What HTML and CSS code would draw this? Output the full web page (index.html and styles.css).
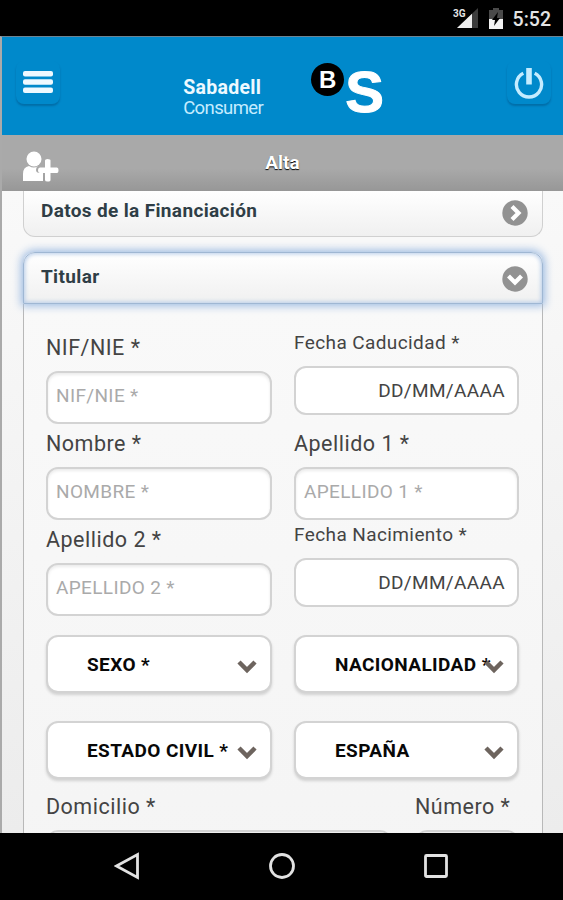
FILE: index.html
```html
<!DOCTYPE html>
<html lang="es">
<head>
  <meta charset="UTF-8" />
  <meta name="viewport" content="width=device-width,initial-scale=1.0">
  <title>Sabadell Consumer - Alta</title>
  <link rel="stylesheet" href="styles.css">
</head>
<body>
  <div class="statusbar">
    <span class="network">3G</span>
    <svg class="signal" width="21" height="20" viewBox="0 0 21 20">
      <path d="M0 20L21 0V20Z" fill="#3c3c3c"/>
      <path d="M0 20L15 5.7V20Z" fill="#eee"/>
    </svg>
    <svg class="battery" width="14" height="21" viewBox="0 0 14 21">
      <path d="M0 2H4V0H10V2H14V21H0Z" fill="#4a4a4a"/>
      <path d="M0 11H14V21H0Z" fill="#f2f2f2"/>
      <path d="M9 4L3 12H6L5 18L11 10H8Z" fill="#000"/>
    </svg>
    <span class="clock">5:52</span>
  </div>

  <div class="app">
    <header class="header">
      <button class="header-btn" title="Menú">
        <svg width="30" height="23" viewBox="0 0 30 23" fill="#eef9ff">
          <rect width="30" height="5.500" rx="2"/>
          <rect y="8.200" width="30" height="5.500" rx="2"/>
          <rect y="16.400" width="30" height="5.500" rx="2"/>
        </svg>
      </button>
      <div class="brand">
        <div class="brand-name"><b>Sabadell</b><span>Consumer</span></div>
        <div class="brand-b">B</div>
        <div class="brand-s">S</div>
      </div>
      <button class="header-btn" title="Salir">
        <svg width="30" height="32" viewBox="0 0 30 32" fill="none" stroke="#c5ecff">
          <path d="M9.3 6.2A12.6 12.6 0 1 0 20.7 6.2" stroke-width="3.4"/>
          <path d="M15 1V17.5" stroke-width="5.6"/>
        </svg>
      </button>
    </header>

    <div class="titlebar">
      <svg class="add-user" width="36" height="31" viewBox="0 0 36 31" fill="#fff">
        <circle cx="11" cy="8" r="7.5"/>
        <path d="M0 30V23Q0 16 6 15Q11 18 15 15Q13 16 13 19Q13 22 17 22H20V30Z"/>
        <path d="M22 9.5Q22 8 24.5 8Q27.500 8 27.500 9.500V16.500H34Q35.500 16.500 35.500 19Q35.500 22 34 22H27.500V29Q27.500 30.500 24.500 30.500Q22 30.500 22 29V22H17Q15 22 15 19Q15 16.500 17 16.500H22Z"/>
      </svg>
      <h1>Alta</h1>
    </div>

    <main class="content">
      <div class="section-head">
        <span>Datos de la Financiación</span>
        <svg class="bullet" width="26" height="26" viewBox="0 0 26 26">
          <circle cx="13" cy="13" r="12.700" fill="#929292"/>
          <path d="M10 6.500L16.500 13L10 19.500" fill="none" stroke="#fff" stroke-width="4.200"/>
        </svg>
      </div>

      <div class="section-head open">
        <span>Titular</span>
        <svg class="bullet" width="26" height="26" viewBox="0 0 26 26">
          <circle cx="13" cy="13" r="12.700" fill="#929292"/>
          <path d="M6.500 10L13 16.500L19.500 10" fill="none" stroke="#fff" stroke-width="4.200"/>
        </svg>
      </div>

      <form class="panel">
        <div class="field">
          <label>NIF/NIE *</label>
          <div class="input">NIF/NIE *</div>
        </div>
        <div class="field date">
          <label>Fecha Caducidad *</label>
          <div class="input">DD/MM/AAAA</div>
        </div>
        <div class="field">
          <label>Nombre *</label>
          <div class="input">NOMBRE *</div>
        </div>
        <div class="field">
          <label>Apellido 1 *</label>
          <div class="input">APELLIDO 1 *</div>
        </div>
        <div class="field">
          <label>Apellido 2 *</label>
          <div class="input">APELLIDO 2 *</div>
        </div>
        <div class="field date">
          <label>Fecha Nacimiento *</label>
          <div class="input">DD/MM/AAAA</div>
        </div>

        <div class="select">
          <span>SEXO *</span>
          <svg width="20" height="14" viewBox="0 0 20 14"><path d="M2 2L10 10L18 2" fill="none" stroke="#6d645e" stroke-width="4.500"/></svg>
        </div>
        <div class="select">
          <span>NACIONALIDAD *</span>
          <svg width="20" height="14" viewBox="0 0 20 14"><path d="M2 2L10 10L18 2" fill="none" stroke="#6d645e" stroke-width="4.500"/></svg>
        </div>
        <div class="select">
          <span>ESTADO CIVIL *</span>
          <svg width="20" height="14" viewBox="0 0 20 14"><path d="M2 2L10 10L18 2" fill="none" stroke="#6d645e" stroke-width="4.500"/></svg>
        </div>
        <div class="select">
          <span>ESPAÑA</span>
          <svg width="20" height="14" viewBox="0 0 20 14"><path d="M2 2L10 10L18 2" fill="none" stroke="#6d645e" stroke-width="4.500"/></svg>
        </div>

        <div class="address">
          <div class="field street">
            <label>Domicilio *</label>
            <div class="input"></div>
          </div>
          <div class="field number">
            <label>Número *</label>
            <div class="input"></div>
          </div>
        </div>
      </form>
    </main>
  </div>

  <nav class="navbar">
    <svg width="26" height="28" viewBox="0 0 26 28"><path d="M2.500 14L23.500 2.500V25.500Z"/></svg>
    <svg width="28" height="28" viewBox="0 0 28 28"><circle cx="14" cy="14" r="11.500"/></svg>
    <svg width="26" height="28" viewBox="0 0 26 28"><rect x="2.500" y="3.500" width="21" height="21" rx="1"/></svg>
  </nav>
</body>
</html>
```
FILE: styles.css
```css
* {
  box-sizing: border-box;
}

body {
  margin: 0;
  height: 900px;
  display: flex;
  flex-direction: column;
  overflow: hidden;
  background: #000;
  font-family: Roboto, "Liberation Sans", sans-serif;
}

svg {
  display: block;
  flex: none;
}

/* Android status bar */
.statusbar {
  height: 36px;
  flex: none;
  display: flex;
  align-items: flex-start;
  justify-content: flex-end;
  padding: 8px 12px 0 0;
  color: #e4e4e4;
}

.network {
  font-size: 10px;
  font-weight: bold;
  line-height: 12px;
  margin-right: -9px;
}

.battery {
  margin: 0 10px 0 11px;
}

.clock {
  font-size: 19.5px;
  font-weight: 500;
  line-height: 23px;
}

.app {
  flex: 1;
  min-height: 0;
  display: flex;
  flex-direction: column;
  border-top: 1px solid #6d8594;
  border-left: 2px solid #aaa;
}

.header {
  height: 98px;
  flex: none;
  display: flex;
  justify-content: space-between;
  align-items: flex-start;
  padding: 24px 12px 0 14px;
  background: #0089cb;
}

.header-btn {
  width: 44px;
  height: 43px;
  padding: 0;
  border: 0;
  border-radius: 8px;
  display: flex;
  justify-content: center;
  align-items: center;
  background: transparent;
  box-shadow: 0 2px 2px rgba(0, 40, 80, 0.28);
}

.brand {
  display: flex;
  align-items: flex-start;
  margin-top: 2px;
}

.brand-name {
  display: flex;
  flex-direction: column;
  width: 82px;
  margin: 15px 46px 0 0;
  color: #c5ecff;
  font-size: 18.5px;
  line-height: 20px;
  letter-spacing: -0.6px;
}

.brand-name b {
  color: #eef9ff;
  font-size: 19.5px;
  letter-spacing: 0.3px;
}

.brand-b {
  width: 33px;
  height: 33px;
  border-radius: 50%;
  background: #000;
  color: #fff;
  font: bold 24px/33px "Liberation Sans", sans-serif;
  text-align: center;
}

.brand-s {
  margin-left: 1px;
  color: #fff;
  font: bold 58px/58px "Liberation Sans", sans-serif;
  -webkit-text-stroke: 1px #fff;
}

.titlebar {
  height: 56px;
  flex: none;
  display: grid;
  grid-template-columns: 1fr auto 1fr;
  background: linear-gradient(#a9a9a9 60%, #979797);
}

.add-user {
  margin: 16px 0 0 21px;
}

.titlebar h1 {
  margin: 16px 0 0;
  font-size: 19px;
  line-height: 24px;
  color: #fff;
  text-shadow: 0 1px 1px #000;
}

.content {
  flex: 1;
  min-height: 0;
  overflow: hidden;
  padding: 0 20px 0 21px;
  background: linear-gradient(#f9f9f9, #ececec);
}

.section-head {
  height: 46px;
  display: flex;
  justify-content: space-between;
  align-items: center;
  padding: 0 14px 6px 17px;
  border: 1px solid #d0d0d0;
  border-top: 0;
  border-radius: 0 0 12px 12px;
  background: linear-gradient(#fff, #f0f0f0);
  color: #2f3e46;
  font-size: 19px;
  font-weight: bold;
  letter-spacing: 0.35px;
}

.bullet {
  position: relative;
  top: 2px;
}

.section-head.open {
  position: relative;
  height: 52px;
  margin-top: 15px;
  padding-bottom: 3px;
  border: 1px solid #9fb7d3;
  border-radius: 12px 12px 0 0;
  box-shadow: 0 0 8px 2px #9dbbe2, inset 0 0 4px 1px #b5cbe8;
}

.panel {
  display: grid;
  grid-template-columns: 226px 225px;
  column-gap: 22px;
  height: 620px;
  align-content: start;
  padding: 24px 22px 0;
  border: 1px solid #b8b8b8;
  border-width: 0 1px;
  background: linear-gradient(#f9f9f9, #f4f4f4);
}

.field {
  height: 96px;
}

.field label {
  display: block;
  height: 43px;
  font-size: 21.5px;
  line-height: 39px;
  letter-spacing: 0.5px;
  color: #444;
  white-space: nowrap;
}

.input {
  height: 53px;
  padding: 0 8px;
  border: 2px solid #d3d3d3;
  border-radius: 12px;
  background: #fff;
  box-shadow: inset 0 2px 3px rgba(0, 0, 0, 0.08);
  font-size: 19px;
  line-height: 45px;
  letter-spacing: 0.35px;
  color: #aaa;
}

.field.date label {
  height: 38px;
  font-size: 19px;
  line-height: 30px;
  letter-spacing: 0.4px;
}

.date .input {
  height: 49px;
  padding-right: 12px;
  box-shadow: none;
  text-align: right;
  color: #444;
}

.select {
  height: 58px;
  margin: 19px 0 9px;
  padding: 0 13px 0 39px;
  display: flex;
  justify-content: space-between;
  align-items: center;
  border: 2px solid #d3d3d3;
  border-radius: 12px;
  background: #fff;
  box-shadow: 0 2px 3px rgba(0, 0, 0, 0.15);
  font-size: 19px;
  font-weight: bold;
  letter-spacing: 0.4px;
  white-space: nowrap;
  color: #080808;
}

.select span {
  width: 0;
}

.select svg {
  margin-top: 5px;
}

.address {
  grid-column: 1 / -1;
  display: flex;
  justify-content: space-between;
}

.street {
  width: 346px;
}

.number {
  width: 104px;
}

.address .field label {
  height: 42px;
  line-height: 37px;
}

/* Android navigation */
.navbar {
  height: 67px;
  flex: none;
  display: flex;
  justify-content: space-between;
  padding: 19px 114px 0;
}

.navbar svg {
  fill: none;
  stroke: #e2e2e2;
  stroke-width: 2.800;
}
```
